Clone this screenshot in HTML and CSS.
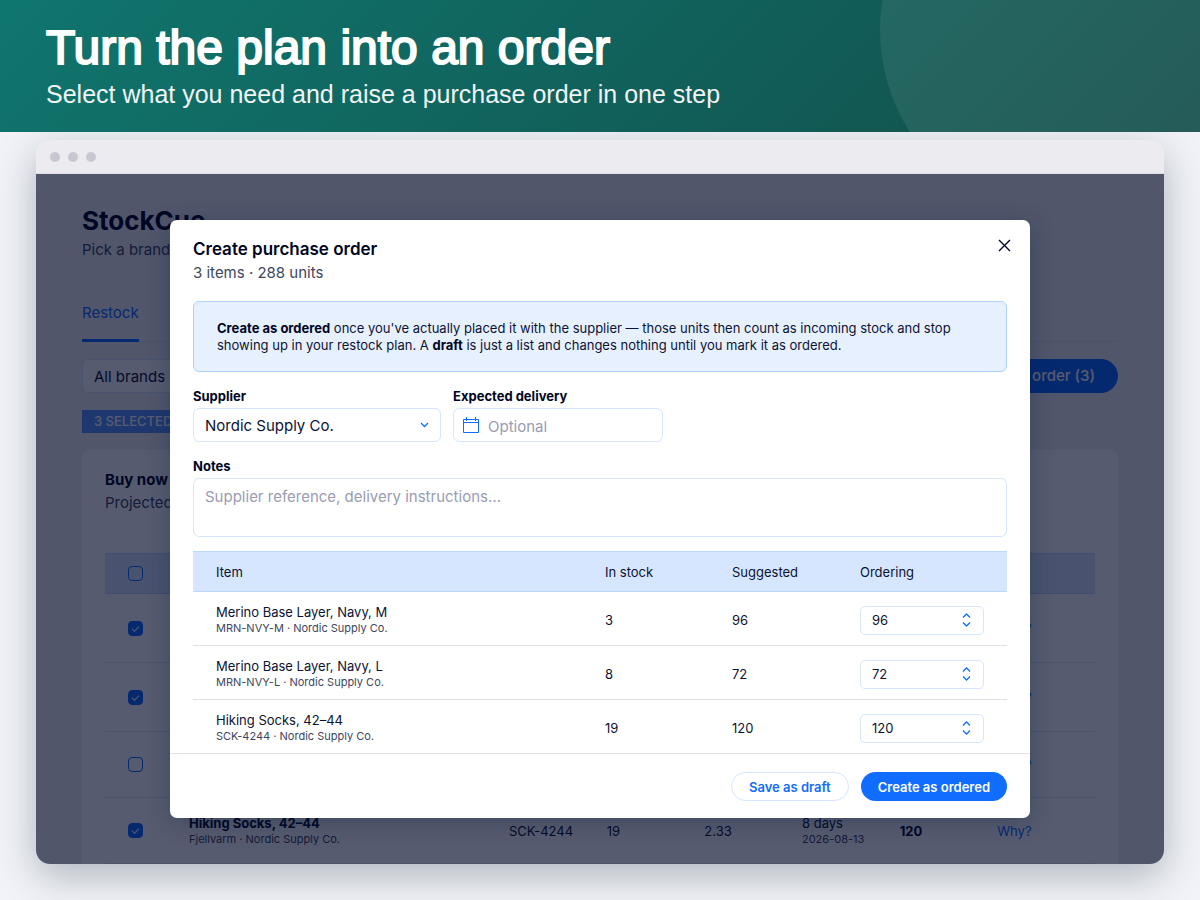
FILE: index.html
```
<!DOCTYPE html>
<html lang="en">
<head>
  <meta charset="UTF-8">
  <meta name="viewport" content="width=device-width, initial-scale=1.0">
  <title>StockCue - Create purchase order</title>
  <link rel="stylesheet" href="styles.css">
</head>
<body>
  <header class="banner">
    <h1>Turn the plan into an order</h1>
    <p>Select what you need and raise a purchase order in one step</p>
  </header>
  <div class="window">
    <div class="window-bar">
      <span class="dot"></span>
      <span class="dot"></span>
      <span class="dot"></span>
    </div>
    <div class="screen">
      <!-- page behind the dialog -->
      <main class="page">
        <h2 class="app-name">StockCue</h2>
        <p class="app-desc">Pick a brand</p>
        <nav class="tabs">
          <a class="tab" href="#">Restock</a>
        </nav>
        <div class="toolbar">
          <select class="brand-select" aria-label="Brand">
            <option>All brands</option>
          </select>
          <button class="btn btn-large" type="button">Create purchase order (3)</button>
        </div>
        <div class="selected-tag">3 SELECTED</div>
        <section class="card">
          <h3>Buy now</h3>
          <p>Projected</p>
          <table class="plan">
            <thead>
              <tr>
                <th class="c-check"><input type="checkbox" aria-label="Select all"></th>
                <th class="c-name"></th>
                <th></th>
                <th></th>
                <th></th>
                <th></th>
                <th></th>
                <th></th>
              </tr>
            </thead>
            <tbody>
              <tr class="tall">
                <td class="c-check"><input type="checkbox" aria-label="Select row" checked></td>
                <td></td><td></td><td></td><td></td><td></td><td></td>
                <td><a href="#">Why?</a></td>
              </tr>
              <tr class="tall">
                <td class="c-check"><input type="checkbox" aria-label="Select row" checked></td>
                <td></td><td></td><td></td><td></td><td></td><td></td>
                <td><a href="#">Why?</a></td>
              </tr>
              <tr>
                <td class="c-check"><input type="checkbox" aria-label="Select row"></td>
                <td></td><td></td><td></td><td></td><td></td><td></td>
                <td><a href="#">Why?</a></td>
              </tr>
              <tr>
                <td class="c-check"><input type="checkbox" aria-label="Select row" checked></td>
                <td><b>Hiking Socks, 42–44</b><small>Fjellvarm · Nordic Supply Co.</small></td>
                <td>SCK-4244</td>
                <td>19</td>
                <td>2.33</td>
                <td>8 days<small>2026-08-13</small></td>
                <td><b>120</b></td>
                <td><a href="#">Why?</a></td>
              </tr>
            </tbody>
          </table>
        </section>
      </main>

      <!-- dialog -->
      <div class="overlay">
        <form class="modal" role="dialog" aria-labelledby="modal-title">
          <div class="modal-head">
            <div>
              <h2 id="modal-title">Create purchase order</h2>
              <p>3 items · 288 units</p>
            </div>
            <button class="close" type="button" aria-label="Close">
              <svg width="13" height="13" viewBox="0 0 13 13"><path d="M1 1l11 11M12 1L1 12"/></svg>
            </button>
          </div>
          <div class="modal-body">
            <p class="notice"><b>Create as ordered</b> once you've actually placed it with the supplier — those units then count as incoming stock and stop showing up in your restock plan. A <b>draft</b> is just a list and changes nothing until you mark it as ordered.</p>
            <div class="fields">
              <div class="field field-supplier">
                <label for="supplier">Supplier</label>
                <div class="control">
                  <select id="supplier">
                    <option>Nordic Supply Co.</option>
                  </select>
                  <svg class="arrows" width="9" height="6" viewBox="0 0 9 6"><path d="M1 1l3.500 3.500L8 1"/></svg>
                </div>
              </div>
              <div class="field field-date">
                <label for="delivery">Expected delivery</label>
                <div class="control">
                  <svg class="calendar" width="16" height="16" viewBox="0 0 16 16"><path d="M0.500 2.500h15v13h-15zM0.500 5.500h15M3.500 0v4M12.500 0v4"/></svg>
                  <input id="delivery" type="text" placeholder="Optional">
                </div>
              </div>
            </div>
            <div class="field field-notes">
              <label for="notes">Notes</label>
              <textarea id="notes" placeholder="Supplier reference, delivery instructions…"></textarea>
            </div>
            <table class="items">
              <thead>
                <tr>
                  <th>Item</th>
                  <th class="c-stock">In stock</th>
                  <th class="c-suggested">Suggested</th>
                  <th class="c-ordering">Ordering</th>
                </tr>
              </thead>
              <tbody>
                <tr>
                  <td>Merino Base Layer, Navy, M<small>MRN-NVY-M · Nordic Supply Co.</small></td>
                  <td>3</td>
                  <td>96</td>
                  <td>
                    <div class="stepper">
                      <input type="number" aria-label="Ordering" value="96">
                      <svg class="arrows" width="9" height="14" viewBox="0 0 9 14"><path d="M1 4.500L4.500 1L8 4.500M1 9.500L4.500 13L8 9.500"/></svg>
                    </div>
                  </td>
                </tr>
                <tr>
                  <td>Merino Base Layer, Navy, L<small>MRN-NVY-L · Nordic Supply Co.</small></td>
                  <td>8</td>
                  <td>72</td>
                  <td>
                    <div class="stepper">
                      <input type="number" aria-label="Ordering" value="72">
                      <svg class="arrows" width="9" height="14" viewBox="0 0 9 14"><path d="M1 4.500L4.500 1L8 4.500M1 9.500L4.500 13L8 9.500"/></svg>
                    </div>
                  </td>
                </tr>
                <tr>
                  <td>Hiking Socks, 42–44<small>SCK-4244 · Nordic Supply Co.</small></td>
                  <td>19</td>
                  <td>120</td>
                  <td>
                    <div class="stepper">
                      <input type="number" aria-label="Ordering" value="120">
                      <svg class="arrows" width="9" height="14" viewBox="0 0 9 14"><path d="M1 4.500L4.500 1L8 4.500M1 9.500L4.500 13L8 9.500"/></svg>
                    </div>
                  </td>
                </tr>
              </tbody>
            </table>
          </div>
          <div class="modal-foot">
            <button class="btn btn-outline" type="button">Save as draft</button>
            <button class="btn" type="button">Create as ordered</button>
          </div>
        </form>
      </div>
    </div>
  </div>
</body>
</html>
```
FILE: styles.css
```
* {
  box-sizing: border-box;
}
body {
  display: flex;
  flex-direction: column;
  height: 100vh;
  margin: 0;
  overflow: hidden;
  background-color: #f2f3f8;
  color: #0c1333;
  font-family: Inter, "Liberation Sans", sans-serif;
  font-size: 13px;
  line-height: 16px;
}
h1, h2, h3, p {
  margin: 0;
}
h2, h3, b {
  color: #000624;
}
a {
  color: #116dff;
  text-decoration: none;
}
input, select, textarea, button {
  padding: 0;
  border: 0;
  background: none;
  color: inherit;
  font: inherit;
  outline: none;
}
select {
  appearance: none;
}
svg {
  fill: none;
  stroke: #116dff;
}

/* banner */
.banner {
  position: relative;
  z-index: 1;
  flex: none;
  height: 132px;
  padding: 20px 46px;
  overflow: hidden;
  background: linear-gradient(135deg, #0f766e, #134e4a);
  color: #fff;
  font-family: "Liberation Sans", Arial, sans-serif;
}
.banner::after {
  content: "";
  position: absolute;
  top: -160px;
  right: -60px;
  width: 380px;
  height: 380px;
  border-radius: 50%;
  background-color: rgba(255, 255, 255, .08);
}
.banner h1 {
  font-size: 48px;
  font-weight: 400;
  line-height: 56px;
  -webkit-text-stroke: 2px #fff;
}
.banner p {
  margin-top: 4px;
  font-size: 25px;
  line-height: 28px;
  opacity: .94;
}

/* browser window */
.window {
  display: flex;
  flex: 1;
  flex-direction: column;
  min-height: 0;
  margin: 8px 36px 36px;
  border-radius: 14px;
  overflow: hidden;
  box-shadow: 0 12px 40px rgba(16, 42, 50, .3);
}
.window-bar {
  display: flex;
  flex: none;
  align-items: center;
  gap: 8px;
  height: 34px;
  padding: 0 14px;
  border-bottom: 1px solid #dcdfe4;
  background-color: #ecebf0;
}
.dot {
  width: 10px;
  height: 10px;
  border-radius: 50%;
  background-color: #c9c8d2;
}
.screen {
  position: relative;
  flex: 1;
  min-height: 0;
  overflow: hidden;
  background-color: #eceff3;
}

/* page behind the dialog */
.page {
  padding: 31px 46px 0;
}
.app-name {
  font-size: 26px;
  line-height: 32px;
}
.app-desc {
  margin-top: 4px;
  color: #404660;
  font-size: 15px;
  line-height: 18px;
}
.tabs {
  display: flex;
  height: 42px;
  margin-top: 41px;
  border-bottom: 1px solid #dfe5eb;
}
.tab {
  height: 42px;
  padding-top: 4px;
  border-bottom: 3px solid #116dff;
  font-size: 15px;
  line-height: 18px;
}
.toolbar {
  display: flex;
  justify-content: space-between;
  margin-top: 17px;
}
.brand-select {
  width: 210px;
  height: 34px;
  padding: 1px 11px 0;
  border: 1px solid #d6e6fe;
  border-radius: 6px;
  background-color: #fff;
  font-size: 15px;
}
.selected-tag {
  width: 110px;
  height: 23px;
  margin-top: 17px;
  padding: 0 12px;
  background-color: #5999ff;
  color: #fff;
  font-weight: 500;
  line-height: 23px;
  white-space: nowrap;
}
.card {
  margin-top: 17px;
  padding: 21px 23px;
  border-radius: 8px;
  background-color: #fff;
}
.card h3 {
  font-size: 15px;
  line-height: 18px;
}
.card p {
  margin-top: 5px;
  color: #404660;
  font-size: 15px;
  line-height: 18px;
}
table {
  width: 100%;
  border-collapse: separate;
  border-spacing: 0;
  table-layout: fixed;
}
th, td {
  padding: 0;
  text-align: left;
}
th {
  height: 41px;
  border: solid #bcd8ff;
  border-width: 1px 0;
  background-color: #d6e6fe;
  font-weight: 400;
}
small {
  display: block;
  color: #404660;
  font-size: 11px;
  line-height: 16px;
}
.plan {
  margin-top: 41px;
}
.plan td {
  height: 66px;
  border-bottom: 1px solid #dfe5eb;
}
.plan .tall td {
  height: 69px;
}
.plan .c-check {
  width: 84px;
  padding-left: 23px;
}
.plan .c-name {
  width: 320px;
}
.plan input {
  display: block;
  width: 15px;
  height: 15px;
  margin: 0;
  border: 1px solid #116dff;
  border-radius: 4px;
  appearance: none;
}
.plan input:checked {
  background-color: #116dff;
}
.plan input:checked::after {
  content: "";
  display: block;
  width: 6px;
  height: 3px;
  margin: 4px 3px;
  border: solid #fff;
  border-width: 0 0 1px 1px;
  transform: rotate(-45deg);
}

/* dialog */
.overlay {
  display: flex;
  position: absolute;
  inset: 0;
  align-items: center;
  justify-content: center;
  background-color: rgba(0, 6, 36, .66);
}
.modal {
  width: 860px;
  max-width: 100%;
  border-radius: 7px;
  background-color: #fff;
  box-shadow: 0 4px 24px rgba(0, 30, 60, .3);
}
.modal-head {
  display: flex;
  align-items: flex-start;
  justify-content: space-between;
  padding: 17px 19px 19px 23px;
}
.modal-head h2 {
  font-size: 17px;
  font-weight: 600;
  line-height: 24px;
}
.modal-head p {
  margin-top: 2px;
  color: #404660;
  font-size: 15px;
  line-height: 19px;
}
.close {
  display: flex;
  margin-top: 2px;
}
.close svg {
  stroke: #000624;
  stroke-width: 1.4;
}
.modal-body {
  padding: 0 23px;
}
.notice {
  padding: 18px 23px 17px;
  border: 1px solid #b0d0ff;
  border-radius: 6px;
  background-color: #e7f0ff;
  line-height: 17px;
}
.fields {
  display: flex;
  gap: 12px;
  margin-top: 16px;
}
.field label {
  display: block;
  margin-bottom: 4px;
  color: #000624;
  font-weight: 700;
}
.field-supplier {
  width: 248px;
}
.field-date {
  width: 210px;
}
.control {
  display: flex;
  align-items: center;
  height: 34px;
  padding: 0 11px;
  border: 1px solid #d6e6fe;
  border-radius: 6px;
  font-size: 15px;
}
.control select,
.control input {
  flex: 1;
  min-width: 0;
  height: 32px;
  padding-top: 2px;
}
.arrows {
  stroke-width: 1.3;
}
.calendar {
  margin: 0 9px 0 -2px;
}
::placeholder {
  color: #9a9cb3;
  opacity: 1;
}
.field-notes {
  margin-top: 16px;
}
textarea {
  display: block;
  width: 100%;
  height: 59px;
  padding: 9px 11px;
  border: 1px solid #d6e6fe;
  border-radius: 6px;
  font-size: 15px;
  line-height: 18px;
  resize: none;
}
.items {
  margin-top: 14px;
}
.items th {
  padding-top: 1px;
}
.items th:first-child,
.items td:first-child {
  padding-left: 23px;
}
.items td {
  height: 54px;
  padding-top: 3px;
  border-bottom: 1px solid #dfe1e6;
}
.items tr:last-child td {
  height: 53px;
  border-bottom: 0;
}
.c-stock {
  width: 127px;
}
.c-suggested {
  width: 128px;
}
.c-ordering {
  width: 147px;
}
.stepper {
  display: flex;
  align-items: center;
  width: 124px;
  height: 29px;
  padding: 0 12px 0 11px;
  border: 1px solid #d6e6fe;
  border-radius: 5px;
}
.stepper input {
  flex: 1;
  min-width: 0;
  appearance: textfield;
}
.modal-foot {
  display: flex;
  justify-content: flex-end;
  gap: 12px;
  padding: 18px 23px 17px;
  border-top: 1px solid #dfe1e6;
}
.btn {
  height: 29px;
  padding: 0 17px;
  border-radius: 17px;
  background-color: #116dff;
  color: #fff;
  font-weight: 600;
}
.btn-outline {
  border: 1px solid #d6e6fe;
  background-color: #fff;
  color: #116dff;
}
.btn-large {
  height: 34px;
  padding: 0 23px;
  font-size: 15px;
  font-weight: 500;
}
```
